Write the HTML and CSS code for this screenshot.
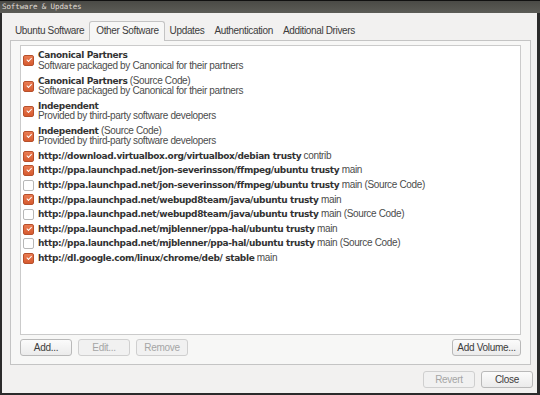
FILE: index.html
```html
<!DOCTYPE html>
<html lang="en">
<head>
  <meta charset="UTF-8">
  <title>Software &amp; Updates</title>
  <link rel="stylesheet" href="styles.css">
</head>
<body>
  <div class="window">
    <div class="titlebar">Software &amp; Updates</div>
    <div class="content">
      <div class="tabs">
        <div class="tab">Ubuntu Software</div>
        <div class="tab active">Other Software</div>
        <div class="tab">Updates</div>
        <div class="tab">Authentication</div>
        <div class="tab">Additional Drivers</div>
      </div>

      <div class="notebook">
        <div class="source-list">
          <div class="source two-line">
            <span class="check on"></span>
            <div class="source-text">
              <div><b>Canonical Partners</b></div>
              <div>Software packaged by Canonical for their partners</div>
            </div>
          </div>
          <div class="source two-line">
            <span class="check on"></span>
            <div class="source-text">
              <div><b>Canonical Partners</b> (Source Code)</div>
              <div>Software packaged by Canonical for their partners</div>
            </div>
          </div>
          <div class="source two-line">
            <span class="check on"></span>
            <div class="source-text">
              <div><b>Independent</b></div>
              <div>Provided by third-party software developers</div>
            </div>
          </div>
          <div class="source two-line">
            <span class="check on"></span>
            <div class="source-text">
              <div><b>Independent</b> (Source Code)</div>
              <div>Provided by third-party software developers</div>
            </div>
          </div>
          <div class="source">
            <span class="check on"></span>
            <div class="source-text"><b>http://download.virtualbox.org/virtualbox/debian trusty</b> contrib</div>
          </div>
          <div class="source">
            <span class="check on"></span>
            <div class="source-text"><b>http://ppa.launchpad.net/jon-severinsson/ffmpeg/ubuntu trusty</b> main</div>
          </div>
          <div class="source">
            <span class="check"></span>
            <div class="source-text"><b>http://ppa.launchpad.net/jon-severinsson/ffmpeg/ubuntu trusty</b> main (Source Code)</div>
          </div>
          <div class="source">
            <span class="check on"></span>
            <div class="source-text"><b>http://ppa.launchpad.net/webupd8team/java/ubuntu trusty</b> main</div>
          </div>
          <div class="source">
            <span class="check"></span>
            <div class="source-text"><b>http://ppa.launchpad.net/webupd8team/java/ubuntu trusty</b> main (Source Code)</div>
          </div>
          <div class="source">
            <span class="check on"></span>
            <div class="source-text"><b>http://ppa.launchpad.net/mjblenner/ppa-hal/ubuntu trusty</b> main</div>
          </div>
          <div class="source">
            <span class="check"></span>
            <div class="source-text"><b>http://ppa.launchpad.net/mjblenner/ppa-hal/ubuntu trusty</b> main (Source Code)</div>
          </div>
          <div class="source">
            <span class="check on"></span>
            <div class="source-text"><b>http://dl.google.com/linux/chrome/deb/ stable</b> main</div>
          </div>
        </div>

        <div class="list-actions">
          <button class="btn">Add...</button>
          <button class="btn" disabled>Edit...</button>
          <button class="btn" disabled>Remove</button>
          <span class="spacer"></span>
          <button class="btn wide">Add Volume...</button>
        </div>
      </div>

      <div class="dialog-actions">
        <button class="btn" disabled>Revert</button>
        <button class="btn">Close</button>
      </div>
    </div>
  </div>
</body>
</html>
```

FILE: styles.css
```css
body {
  margin: 0;
  background-color: #2b2b2b;
  font-family: "Liberation Sans", Arial, sans-serif;
  font-size: 10px;
  color: #3c3c3c;
}
.window {
  width: 540px;
  height: 395px;
  display: flex;
  flex-direction: column;
  background-color: #2b2b2b;
}
.titlebar {
  height: 13px;
  box-sizing: border-box;
  border-top: 1px solid #111;
  background: linear-gradient(#4a4a46, #5c5c57);
  color: #e0ddd6;
  font-family: "DejaVu Sans Mono", monospace;
  font-size: 7.5px;
  line-height: 11px;
  padding-left: 2px;
  letter-spacing: -0.1px;
}
.content {
  flex: 1;
  margin: 0 3px 2px 2px;
  background-color: #f2f1f0;
  display: flex;
  flex-direction: column;
  padding: 0 0 0 8px;
}

/* tabs */
.tabs {
  display: flex;
  height: 27px;
  align-items: flex-end;
}
.tab {
  height: 18px;
  line-height: 18px;
  padding: 0 5px;
  color: #3c3c3c;
  letter-spacing: -0.35px;
  white-space: nowrap;
}
.tab.active {
  height: 19px;
  background-color: #f7f7f6;
  border: 1px solid #c4c4c4;
  border-bottom: none;
  border-radius: 3px 3px 0 0;
  padding: 0 5px 0 6px;
  margin-bottom: -1px;
  position: relative;
  z-index: 1;
}

/* notebook */
.notebook {
  width: 521px;
  height: 325px;
  box-sizing: border-box;
  border: 1px solid #c4c4c4;
  background-color: #f7f7f6;
  padding: 4px 9px 0 9px;
  display: flex;
  flex-direction: column;
}
.source-list {
  height: 290px;
  box-sizing: border-box;
  border: 1px solid #cbcbcb;
  background-color: #fff;
  padding-top: 2.4px;
}
.source {
  display: flex;
  align-items: center;
  height: 14.6px;
  padding-left: 2px;
  white-space: nowrap;
}
.source.two-line {
  height: 25.1px;
}
.source-text {
  line-height: 10.5px;
  letter-spacing: -0.35px;
  color: #4c4c4c;
}
.source-text b {
  font-family: "DejaVu Sans", sans-serif;
  font-size: 9px;
  letter-spacing: -0.36px;
  color: #333;
}
.check {
  width: 9px;
  height: 9px;
  margin-right: 4px;
  border: 1px solid #b7b7b7;
  border-radius: 2px;
  background-color: #fff;
  flex-shrink: 0;
  position: relative;
}
.check.on {
  border-color: #b6502c;
  background: linear-gradient(#ea7c52, #d65a2f);
}
.check.on::after {
  content: "";
  position: absolute;
  left: 2px;
  top: 1px;
  width: 4px;
  height: 2px;
  border-left: 1.5px solid #fff;
  border-bottom: 1.5px solid #fff;
  transform: rotate(-45deg) translate(0, 1px);
}

/* buttons */
.list-actions {
  display: flex;
  gap: 6px;
  margin-top: 4px;
}
.spacer {
  flex: 1;
}
.btn {
  width: 52px;
  height: 17px;
  padding: 0;
  border: 1px solid #b9b9b9;
  border-radius: 3px;
  background: linear-gradient(#fbfbfb, #ebebeb);
  font-family: "Liberation Sans", Arial, sans-serif;
  font-size: 10px;
  letter-spacing: -0.3px;
  color: #3c3c3c;
}
.btn:disabled {
  color: #a5a5a5;
  border-color: #cfcfcf;
  background: #f1f1f1;
}
.btn.wide {
  width: 69px;
}
.dialog-actions {
  display: flex;
  justify-content: flex-end;
  gap: 6px;
  padding: 6px 4px 0 0;
}
```
